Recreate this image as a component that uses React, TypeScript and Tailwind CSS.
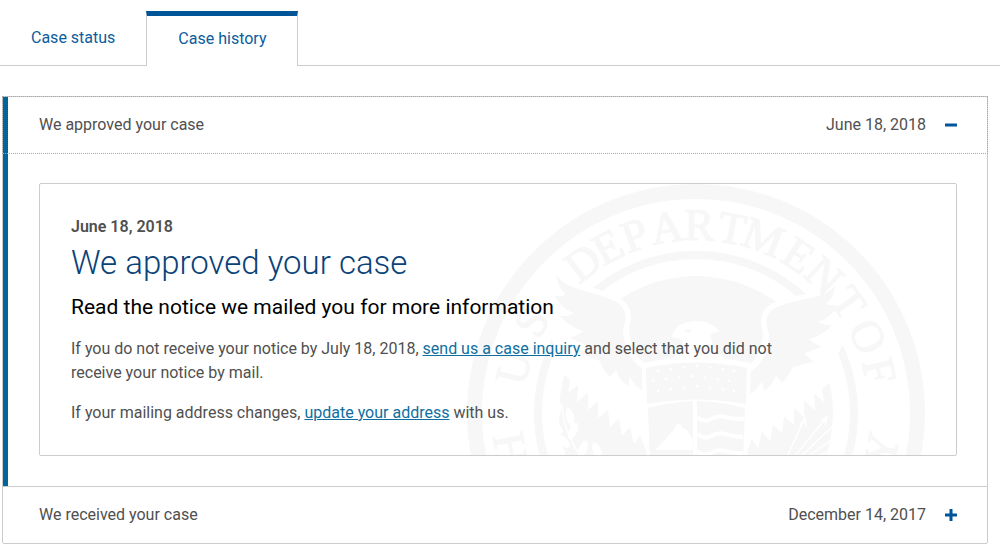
import React, { useState } from 'react';
import clsx from 'clsx';

const tabs = ['Case status', 'Case history'];

const sealLetters = [
  { char: 'U', angle: -76 },
  { char: 'S', angle: -61 },
  { char: 'D', angle: -37 },
  { char: 'E', angle: -28 },
  { char: 'P', angle: -19 },
  { char: 'A', angle: -9 },
  { char: 'R', angle: 1 },
  { char: 'T', angle: 11 },
  { char: 'M', angle: 21 },
  { char: 'E', angle: 33 },
  { char: 'N', angle: 43 },
  { char: 'T', angle: 54 },
  { char: 'O', angle: 66 },
  { char: 'F', angle: 77 },
];

const SealWing = () => (
  <g>
    <path
      d="M-147 -148 C-130 -128 -100 -126 -82 -118 C-64 -110 -63 -98 -67 -84 C-66 -66 -58 -54 -50 -50 L-50 38 L-56 22 L-62 31 L-66 14 L-74 23 L-77 6 L-86 14 L-88 -3 L-98 5 L-98 -12 L-108 -3 L-108 -20 L-119 -11 L-118 -28 L-128 -20 L-126 -33 L-134 -40 L-139 -62 L-150 -86 Z"
      fill="#fff"
    />
    <path
      d="M-139 -138 C-132 -124 -104 -122 -86 -114 C-70 -108 -68 -98 -73 -84 C-73 -66 -64 -50 -54 -45 L-54 -23 C-60 -26 -62 -30 -66 -36 L-68 -27 C-76 -33 -78 -38 -80 -43 L-86 -36 C-92 -42 -94 -47 -96 -52 L-118 -60 C-112 -63 -110 -65 -108 -67 L-126 -75 C-120 -77 -116 -79 -113 -82 C-122 -85 -130 -90 -136 -97 C-130 -96 -126 -98 -122 -100 C-132 -104 -138 -110 -142 -118 C-138 -116 -134 -117 -130 -118 C-136 -124 -139 -130 -139 -138 Z"
      fill="#f7f7f7"
    />
  </g>
);

const SealShield = () => (
  <g>
    <path d="M-53 -50 Q0 -62 55 -50 L51 50 L-49 50 Z" fill="#fff" />
    <path d="M-50 -45 Q0 -56 51 -45 L50 -9 Q0 -18 -49 -9 Z" fill="#f7f7f7" />
    <path d="M-48 -5 Q-24 -11 -3 -12 L-3 50 L-46 50 Z" fill="#f7f7f7" />
    <path d="M1 -12 Q28 -11 49 -5 L47 50 L1 50 Z" fill="#f7f7f7" />
    {[-43, -34, -25].map((y, row) =>
      [-38, -25, -12, 1, 14, 27, 38].map((x) => (
        <circle key={`${x}${y}`} cx={row === 1 ? x - 5 : x} cy={y - 4 + Math.abs(x) / 8 + row} r="1.3" fill="#fff" />
      ))
    )}
    <path d="M-41 37 L-34 30 L-28 23 L-23 18 L-20 12 L-16 10 L-13 15 L-9 17 L-4 25 L-3 37 Z" fill="#fff" />
    <g fill="none" stroke="#fff" strokeWidth="4">
      <path d="M1 4 Q8 10 15 6 T29 4 T48 6" />
      <path d="M1 21 Q8 27 15 23 T29 21 T47 24" />
      <path d="M1 38 Q8 44 15 40 T29 38 T47 40" />
    </g>
  </g>
);

const Seal = ({ className }: { className?: string }) => (
  <svg className={className} width="458" height="458" viewBox="-229 -229 458 458" aria-hidden="true">
    <g fill="none" stroke="#f7f7f7">
      <circle r="221.5" strokeWidth="15" />
      <circle r="158" strokeWidth="8" />
    </g>
    <circle r="137" fill="#f7f7f7" />

    <SealWing />
    <g transform="skewY(4) scale(-1 1)">
      <SealWing />
    </g>
    <SealShield />
    <path
      d="M-24 -76 C-22 -87 -12 -92 2 -92 C12 -92 18 -87 24 -82 L15 -79 C14 -70 20 -62 30 -53 L-26 -53 C-16 -60 -12 -66 -13 -72 L-18 -75 Z"
      fill="#fff"
    />
    <path d="M-13 -83 L-4 -84 L-7 -80 Z" fill="#f7f7f7" />

    {/* olive branch and arrows */}
    <g fill="#fff">
      {[[-139, -2, 20], [-126, 4, -15], [-140, 14, -50], [-123, 18, 25], [-133, 28, -45], [-113, 36, 20], [-99, 38, -20]].map(
        ([x, y, turn]) => (
          <ellipse key={`${x}${y}`} rx="4" ry="9" transform={`translate(${x} ${y}) rotate(${turn})`} />
        )
      )}
    </g>
    <g fill="none" stroke="#fff" strokeWidth="1.5">
      <path d="M-134 -8 Q-133 20 -112 48" />
      <path d="M88 50 L109 5 M93 50 L131 4 M98 50 L142 8 M103 50 L145 20 M108 50 L146 32" />
      <path d="M104 13 L109 5 L110 14 M125 8 L131 4 L129 12 M136 11 L142 8 L139 16 M138 22 L145 20 L141 27" />
    </g>

    <g
      fill="#f7f7f7"
      stroke="#f7f7f7"
      strokeWidth="1"
      fontFamily="'Liberation Serif', serif"
      fontSize="45"
      textAnchor="middle"
    >
      {sealLetters.map(({ char, angle }) => (
        <text key={angle} y="-173" transform={`rotate(${angle})`}>
          {char}
        </text>
      ))}
      <text y="204" transform="rotate(79)">H</text>
      <text y="204" transform="rotate(-79)">Y</text>
    </g>
  </svg>
);

const ToggleIcon = ({ open }: { open: boolean }) => (
  <svg width="12" height="12" viewBox="0 0 12 12" fill="#005599" aria-hidden="true">
    <rect y="4.5" width="12" height="3" rx="0.5" />
    {!open && <rect x="4.5" width="3" height="12" rx="0.5" />}
  </svg>
);

interface HistoryHeaderProps {
  title: string;
  date: string;
  open: boolean;
  onToggle: () => void;
}

const HistoryHeader: React.FC<HistoryHeaderProps> = ({ title, date, open, onToggle }) => (
  <button
    type="button"
    aria-expanded={open}
    onClick={onToggle}
    className={clsx(
      'flex w-full items-center justify-between py-4 pr-[30px] text-left',
      open ? 'border-l-[5px] border-[#006699] pl-[31px] outline-1 outline-dotted outline-[#aaa]' : 'pl-9'
    )}
  >
    <span>{title}</span>
    <span className="flex items-center gap-[19px]">
      {date}
      <ToggleIcon open={open} />
    </span>
  </button>
);

const App = () => {
  const [activeTab, setActiveTab] = useState('Case history');
  const [openApproved, setOpenApproved] = useState(true);
  const [openReceived, setOpenReceived] = useState(false);

  return (
    <main className="bg-white font-['Roboto',sans-serif] text-[16px] leading-6 text-[#505050]">
      <div role="tablist" className="flex text-[#0d5c9d]">
        {tabs.map((tab) => (
          <button
            key={tab}
            type="button"
            role="tab"
            aria-selected={tab === activeTab}
            onClick={() => setActiveTab(tab)}
            className={clsx(
              'mt-[11px] h-[55px] px-[31px]',
              tab === activeTab
                ? 'border-x border-t-[5px] border-x-[#ccc] border-t-[#005599] pb-[5px]'
                : 'border-b border-b-[#ccc]'
            )}
          >
            {tab}
          </button>
        ))}
        <div className="grow border-b border-[#ccc]" />
      </div>

      <section className="mt-[30px] mr-3 ml-0.5 rounded-xs border border-[#ccc]">
        <HistoryHeader
          title="We approved your case"
          date="June 18, 2018"
          open={openApproved}
          onToggle={() => setOpenApproved(!openApproved)}
        />
        {openApproved && (
          <div className="border-l-[5px] border-[#006699] py-[30px] pr-[30px] pl-[31px]">
            <article className="relative overflow-hidden rounded-xs border border-[#ccc] px-[31px] pt-[31px] pb-[30px]">
              <Seal className="absolute top-0 right-[31px]" />
              <div className="relative max-w-[740px]">
                <p className="font-semibold">June 18, 2018</p>
                <h2 className="mt-1 text-[33px] leading-10 font-light text-[#0a4378]">We approved your case</h2>
                <h3 className="mt-[10px] text-[21px] leading-7 text-black">
                  Read the notice we mailed you for more information
                </h3>
                <p className="mt-4">
                  If you do not receive your notice by July 18, 2018,{' '}
                  <a href="#inquiry" className="text-[#0e6f9f] underline">
                    send us a case inquiry
                  </a>{' '}
                  and select that you did not receive your notice by mail.
                </p>
                <p className="mt-4">
                  If your mailing address changes,{' '}
                  <a href="#address" className="text-[#0e6f9f] underline">
                    update your address
                  </a>{' '}
                  with us.
                </p>
              </div>
            </article>
          </div>
        )}
        <div className="border-t border-[#ccc]">
          <HistoryHeader
            title="We received your case"
            date="December 14, 2017"
            open={openReceived}
            onToggle={() => setOpenReceived(!openReceived)}
          />
        </div>
      </section>
    </main>
  );
};

export default App;
